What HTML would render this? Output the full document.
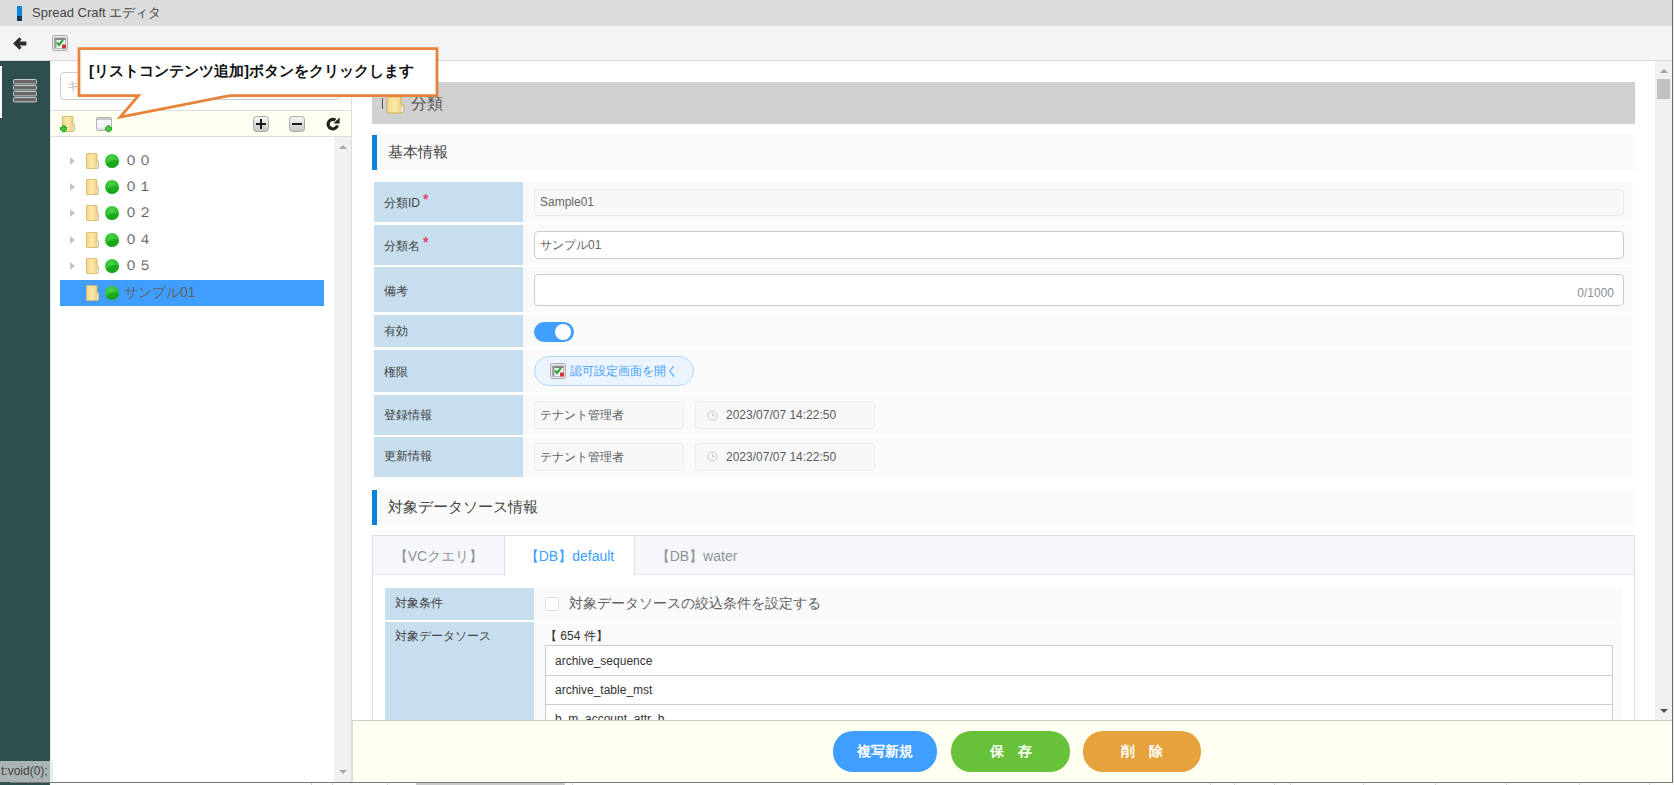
<!DOCTYPE html>
<html lang="ja">
<head>
<meta charset="utf-8">
<title>Spread Craft エディタ</title>
<style>
*{box-sizing:border-box;}
html,body{margin:0;padding:0;}
body{width:1674px;height:785px;overflow:hidden;background:#fff;position:relative;font-family:"Liberation Sans",sans-serif;font-size:12px;color:#444;}
.abs{position:absolute;}
#titlebar{left:0;top:0;width:1672px;height:26px;background:#dcdcdc;}
#titlebar .bar{left:17px;top:6.3px;width:5.2px;height:14.6px;background:linear-gradient(#0a86dc 0,#0a86dc 66%,#0b3f60 66%,#0b3f60 100%);}
#titlebar .ttl{left:32px;top:0;line-height:25px;font-size:13px;color:#444;white-space:nowrap;}
#toolbar{left:0;top:26px;width:1672px;height:35px;background:#f4f4f4;border-bottom:1px solid #d9d9d9;}
#winr{left:1672px;top:0;width:1px;height:783px;background:#6a6a6a;}
#winr2{left:1673px;top:0;width:1px;height:785px;background:#f0f0f0;}
#sidebar{left:0;top:61px;width:50px;height:724px;background:#2f4f4f;}
#leftpanel{left:50px;top:61px;width:302px;height:721px;background:#fff;border-right:1px solid #ddd;border-left:1px solid #dfe6ea;}
#search{left:60px;top:72px;width:280px;height:28px;border:1px solid #ccc;border-radius:4px;background:#fff;color:#bbb;font-size:12px;line-height:26px;padding-left:6px;}
#strip{left:51px;top:110px;width:300px;height:27.4px;background:#fffff2;border-top:1px solid #ddd;border-bottom:1px solid #ddd;}
#lscroll{left:334px;top:137px;width:17px;height:645px;background:#f1f1f1;}
.trow{left:60px;width:264px;height:26px;}
.trow.sel{background:#409eff;}
.trow .arr{left:10px;top:9px;width:0;height:0;border-left:5px solid #c0c4cc;border-top:4px solid transparent;border-bottom:4px solid transparent;}
.trow .fold{left:26px;top:5px;}
.trow .ball{left:45.3px;top:6px;width:14px;height:14px;border-radius:50%;background:radial-gradient(circle at 45% 30%,#4ad04a 0,#2fc02f 50%,#1fae1f 100%);overflow:hidden;}
.trow .ball:after{content:"";position:absolute;left:1px;top:6.5px;width:18px;height:14px;border-radius:50%;background:rgba(10,150,10,.55);}
.trow .txt{left:64px;top:0;line-height:24px;font-size:14px;color:#606266;white-space:nowrap;}
#main{left:352px;top:61px;width:1303px;height:660px;background:#fff;overflow:hidden;}
#rscroll{left:1655px;top:61px;width:17px;height:660px;background:#f1f1f1;}
#hdr{left:372.4px;top:82.2px;width:1262.6px;height:41.7px;background:#d0d0d0;}
.sec{left:372.4px;width:1262.6px;height:35.2px;background:#fafafa;border-left:5px solid #0a84d8;font-size:15px;color:#444;line-height:34px;padding-left:11px;white-space:nowrap;}
.lab{left:374px;width:149px;background:#c6deed;color:#444;font-size:12px;padding-left:10px;white-space:nowrap;}
.val{left:523px;width:1110px;background:#fafafa;}
.req{color:#e0406a;font-size:14px;position:relative;top:-3px;left:3px;font-weight:bold;}
.inp{left:534px;width:1090px;border:1px solid #ccc;border-radius:4px;background:#fff;font-size:12px;color:#666;padding-left:5px;white-space:nowrap;}
.inp.dis{background:#f8f8f8;border-color:#ebebee;}
.ro{border:1px solid #eeeef1;border-radius:4px;background:#f8f8f9;font-size:12px;color:#5a5c60;height:28px;line-height:26px;white-space:nowrap;}
#footer{left:352px;top:720px;width:1320px;height:62px;background:#fffff2;border-top:1px solid #ccc;border-left:1px solid #ddd;}
.btn{top:731px;height:40.6px;border-radius:20px;color:#fff;font-size:14px;font-weight:bold;text-align:center;line-height:40px;white-space:nowrap;}
#botline{left:10px;top:782px;width:1663px;height:1px;background:#777;}
#status{left:0;top:761px;width:53px;height:21px;background:linear-gradient(90deg,#a9b3b3 0,#a9b3b3 50px,#e9ecec 50px);color:#444;font-size:12px;line-height:21px;padding-left:1px;white-space:nowrap;}
#tabs{left:372px;top:535px;width:1263px;height:200px;border:1px solid #dcdfe6;background:#fff;}
#tabhead{left:0;top:0;width:1261px;height:39.4px;background:#f5f7fa;border-bottom:1px solid #e4e7ed;}
.tab{top:0;height:39.4px;line-height:40px;font-size:14px;color:#909399;text-align:center;white-space:nowrap;}
.tab.act{background:#fff;color:#409eff;border-left:1px solid #dcdfe6;border-right:1px solid #dcdfe6;height:40.4px;}
.lab2{left:385px;width:149px;background:#c6deed;color:#444;font-size:12px;padding-left:10px;white-space:nowrap;}
.val2{left:534px;width:1088px;background:#fafafa;}
#list{left:545px;top:645.2px;width:1068px;height:100px;border:1px solid #ccc;background:#fff;}
#list div{height:30px;line-height:29px;border-bottom:1px solid #ccc;padding-left:9px;font-size:12px;color:#333;white-space:nowrap;}
</style>
</head>
<body>

<svg width="0" height="0" style="position:absolute">
<defs>
<linearGradient id="gf" x1="0" y1="0" x2="1" y2="0"><stop offset="0" stop-color="#f3d88e"/><stop offset="0.45" stop-color="#fbe9a8"/><stop offset="1" stop-color="#ecc878"/></linearGradient>
<linearGradient id="gb" x1="0" y1="0" x2="0" y2="1"><stop offset="0" stop-color="#f8f8f8"/><stop offset="1" stop-color="#c4c4c4"/></linearGradient>
<symbol id="fold" viewBox="0 0 13 16"><path d="M0.5 1 Q0.5 0.5 1 0.5 L10.5 0.5 Q11 0.5 11 1 L11 7 Q12.8 7.5 12.6 10 L12.4 14.5 Q12.3 15.5 11 15.5 L1 15.5 Q0.5 15.5 0.5 15 Z" fill="url(#gf)" stroke="#d9b86c" stroke-width="0.9"/><path d="M11.2 8 Q12.7 8.8 12.3 11 L12 14.6 Q11 15.2 10.2 14.4 Q11.3 12 11.2 8 Z" fill="#f4f7ee" stroke="#c9b88a" stroke-width="0.4"/></symbol>
<symbol id="gplus" viewBox="0 0 8 8"><path d="M2.6 0.6 L5.4 0.6 L5.4 2.6 L7.4 2.6 L7.4 5.4 L5.4 5.4 L5.4 7.4 L2.6 7.4 L2.6 5.4 L0.6 5.4 L0.6 2.6 L2.6 2.6 Z" fill="#48d048" stroke="#22a822" stroke-width="1.1" stroke-linejoin="round"/></symbol>
<symbol id="chk" viewBox="0 0 16 16"><rect x="0.5" y="0.5" width="15" height="15" rx="2" fill="#e8e8e8" stroke="#aaa"/><rect x="2.5" y="3" width="11" height="10.5" fill="#f6f6f6" stroke="#999" stroke-width="0.6"/><rect x="2.5" y="3" width="11" height="2" fill="#888"/><rect x="2.5" y="3" width="2" height="10" fill="#999"/><path d="M5 7.5 L7 10 L11 5" stroke="#2faa3b" stroke-width="2.2" fill="none"/><rect x="10" y="9.5" width="4" height="4" fill="#d9303a"/></symbol>
</defs>
</svg>
<!-- window chrome -->
<div id="titlebar" class="abs"><div class="bar abs"></div><div class="ttl abs">Spread Craft エディタ</div></div>
<div id="toolbar" class="abs"></div>
<svg class="abs" style="left:12px;top:36px" width="16" height="15" viewBox="12 36 16 15"><path d="M13.1 43.5 L19.4 37.2 L21.6 39.4 L19.6 41.4 L26.4 41.4 L26.4 45.6 L19.6 45.6 L21.6 47.6 L19.4 49.8 Z" fill="#2e2e2e"/></svg>
<svg class="abs" style="left:52px;top:35px" width="16" height="16" viewBox="0 0 16 16"><rect x="0.5" y="0.5" width="15" height="15" rx="2" fill="#e8e8e8" stroke="#aaa"/><rect x="2.5" y="3" width="11" height="10.5" fill="#f6f6f6" stroke="#999" stroke-width="0.6"/><rect x="2.5" y="3" width="11" height="2" fill="#888"/><rect x="2.5" y="3" width="2" height="10" fill="#999"/><path d="M5 7.5 L7 10 L11 5" stroke="#2faa3b" stroke-width="2.2" fill="none"/><rect x="10" y="9.5" width="4" height="4" fill="#d9303a"/></svg>

<div id="sidebar" class="abs">
  <div class="abs" style="left:0;top:5px;width:2px;height:52px;background:#fff"></div>
  <svg class="abs" style="left:12.3px;top:17.3px" width="26" height="26" viewBox="0 0 26 26"><g fill="#6a6464" stroke="#c4cccc" stroke-width="1"><rect x="1.5" y="1.5" width="23" height="4.4" rx="1"/><rect x="1.5" y="7.5" width="23" height="4.4" rx="1"/><rect x="1.5" y="13.5" width="23" height="4.4" rx="1"/><rect x="1.5" y="19.5" width="23" height="4.4" rx="1"/></g></svg>
</div>

<div id="leftpanel" class="abs"></div>
<div id="search" class="abs">キーワード</div>
<div id="strip" class="abs"></div>
<div id="lscroll" class="abs">
  <div class="abs" style="left:5px;top:8px;width:0;height:0;border-bottom:4px solid #a8a8a8;border-left:4px solid transparent;border-right:4px solid transparent"></div>
  <div class="abs" style="left:5px;top:633px;width:0;height:0;border-top:4px solid #a8a8a8;border-left:4px solid transparent;border-right:4px solid transparent"></div>
</div>


<svg class="abs" style="left:62px;top:116px" width="13" height="16"><use href="#fold"/></svg>
<svg class="abs" style="left:59.8px;top:125.2px" width="7.4" height="7.6"><use href="#gplus"/></svg>
<svg class="abs" style="left:96px;top:117px" width="16" height="14" viewBox="0 0 16 14"><rect x="0.5" y="0.5" width="15" height="13" rx="1.5" fill="#f6f5f7" stroke="#b4b4b4"/><rect x="1" y="1" width="14" height="2" fill="#c6c6c6"/><rect x="1.5" y="10.5" width="13" height="2.5" fill="#e2e2e5"/></svg>
<svg class="abs" style="left:105.2px;top:125.3px" width="7.2" height="7.6"><use href="#gplus"/></svg>
<svg class="abs" style="left:253px;top:116px" width="16" height="16" viewBox="0 0 16 16"><rect x="0.5" y="0.5" width="15" height="15" rx="3" fill="url(#gb)" stroke="#a9a9a9"/><path d="M3 8 H13 M8 3 V13" stroke="#1a1a1a" stroke-width="2"/></svg>
<svg class="abs" style="left:289px;top:116px" width="16" height="16" viewBox="0 0 16 16"><rect x="0.5" y="0.5" width="15" height="15" rx="3" fill="url(#gb)" stroke="#a9a9a9"/><path d="M3 8 H13" stroke="#1a1a1a" stroke-width="2"/></svg>
<svg class="abs" style="left:326px;top:117px" width="14" height="14" viewBox="0 0 14 14"><path d="M11.4 8.4 A4.7 4.7 0 1 1 9.4 3.2" fill="none" stroke="#222" stroke-width="3.2"/><path d="M13.6 0.4 L13.6 6.6 L7.4 6.6 Z" fill="#222"/></svg>
<div class="trow abs" style="top:147.6px"><div class="arr abs"></div><svg class="fold abs" width="13" height="16"><use href="#fold"/></svg><div class="ball abs"></div><div class="txt abs">００</div></div>
<div class="trow abs" style="top:173.9px"><div class="arr abs"></div><svg class="fold abs" width="13" height="16"><use href="#fold"/></svg><div class="ball abs"></div><div class="txt abs">０１</div></div>
<div class="trow abs" style="top:200.2px"><div class="arr abs"></div><svg class="fold abs" width="13" height="16"><use href="#fold"/></svg><div class="ball abs"></div><div class="txt abs">０２</div></div>
<div class="trow abs" style="top:226.5px"><div class="arr abs"></div><svg class="fold abs" width="13" height="16"><use href="#fold"/></svg><div class="ball abs"></div><div class="txt abs">０４</div></div>
<div class="trow abs" style="top:252.8px"><div class="arr abs"></div><svg class="fold abs" width="13" height="16"><use href="#fold"/></svg><div class="ball abs"></div><div class="txt abs">０５</div></div>
<div class="trow abs sel" style="top:279.5px"><svg class="fold abs" width="13" height="16"><use href="#fold"/></svg><div class="ball abs"></div><div class="txt abs">サンプル01</div></div>
<div id="main" class="abs"></div>
<div id="rscroll" class="abs">
  <div class="abs" style="left:4.5px;top:8px;width:0;height:0;border-bottom:4px solid #a3a3a3;border-left:4px solid transparent;border-right:4px solid transparent"></div>
  <div class="abs" style="left:2px;top:18px;width:13px;height:20px;background:#c1c1c1"></div>
  <div class="abs" style="left:4.5px;top:648px;width:0;height:0;border-top:4px solid #505050;border-left:4px solid transparent;border-right:4px solid transparent"></div>
</div>

<div id="hdr" class="abs"><div class="abs" style="left:10px;top:16px;width:1px;height:11px;background:#555"></div>
<svg class="abs" style="left:13.6px;top:13.6px" width="19" height="18" viewBox="0 0 19 18"><path d="M1 2.5 Q1 1 2.5 1 L13.5 1 Q15 1 15 2.5 L15 8 Q18.4 8.6 18 12 L17.6 15.5 Q17.4 17 15.5 17 L2.5 17 Q1 17 1 15.5 Z" fill="url(#gf)" stroke="#d2ab55" stroke-width="1"/><path d="M15.3 9 Q17.8 10 17.3 12.6 L16.9 16 Q15.4 16.8 14.2 15.6 Q15.6 12.6 15.3 9 Z" fill="#f4f7ee" stroke="#c9b88a" stroke-width="0.5"/></svg>
<div class="abs" style="left:39px;top:0;line-height:43px;font-size:16px;color:#555;white-space:nowrap">分類</div></div>
<div class="sec abs" style="top:134.5px">基本情報</div>
<div class="sec abs" style="top:490px">対象データソース情報</div>

<div class="lab abs" style="top:182px;height:40px;line-height:40px">分類ID<span class="req">*</span></div><div class="val abs" style="top:182px;height:40px"></div>
<div class="lab abs" style="top:224.5px;height:40.3px;line-height:40.3px">分類名<span class="req">*</span></div><div class="val abs" style="top:224.5px;height:40.3px"></div>
<div class="lab abs" style="top:267px;height:45.4px;line-height:48px">備考</div><div class="val abs" style="top:267px;height:45.4px"></div>
<div class="lab abs" style="top:315.3px;height:32.2px;line-height:32.2px">有効</div><div class="val abs" style="top:315.3px;height:32.2px"></div>
<div class="lab abs" style="top:350.2px;height:41.8px;line-height:44.6px">権限</div><div class="val abs" style="top:350.2px;height:41.8px"></div>
<div class="lab abs" style="top:394.8px;height:40px;line-height:40px">登録情報</div><div class="val abs" style="top:394.8px;height:40px"></div>
<div class="lab abs" style="top:437.3px;height:39.7px;line-height:39.7px">更新情報</div><div class="val abs" style="top:437.3px;height:39.7px"></div>
<div class="inp dis abs" style="top:188.7px;height:27.3px;line-height:25.6px">Sample01</div>
<div class="inp abs" style="top:231px;height:28px;line-height:26px">サンプル01</div>
<div class="inp abs" style="top:274px;height:32px"></div>
<div class="abs" style="left:1540px;top:286px;width:74px;text-align:right;font-size:12px;color:#8c8f96;line-height:14px">0/1000</div>
<div class="abs" style="left:534px;top:322px;width:40px;height:20px;border-radius:10px;background:#409eff"><div class="abs" style="left:21px;top:2px;width:16px;height:16px;border-radius:50%;background:#fff"></div></div>
<div class="abs" style="left:534px;top:356px;width:160px;height:30px;border-radius:15px;border:1px solid #b3d8ff;background:#ecf5ff;color:#409eff;font-size:12px;line-height:28px;white-space:nowrap"><svg class="abs" style="left:15px;top:6px" width="16" height="16"><use href="#chk"/></svg><span class="abs" style="left:35px;top:0">認可設定画面を開く</span></div>
<div class="ro abs" style="left:534px;top:401px;width:150px;padding-left:5px">テナント管理者</div>
<div class="ro abs" style="left:695px;top:401px;width:180px;padding-left:30px">2023/07/07 14:22:50<svg class="abs" style="left:10.5px;top:7.6px" width="11" height="11" viewBox="0 0 11 11"><circle cx="5.5" cy="5.5" r="4.6" fill="none" stroke="#c0c4cc" stroke-width="1"/><path d="M5.5 2.8 V5.8 H7.8" fill="none" stroke="#c0c4cc" stroke-width="1"/></svg></div>
<div class="ro abs" style="left:534px;top:442.8px;width:150px;padding-left:5px">テナント管理者</div>
<div class="ro abs" style="left:695px;top:442.8px;width:180px;padding-left:30px">2023/07/07 14:22:50<svg class="abs" style="left:10.5px;top:7.6px" width="11" height="11" viewBox="0 0 11 11"><circle cx="5.5" cy="5.5" r="4.6" fill="none" stroke="#c0c4cc" stroke-width="1"/><path d="M5.5 2.8 V5.8 H7.8" fill="none" stroke="#c0c4cc" stroke-width="1"/></svg></div>
<div id="tabs" class="abs"><div id="tabhead" class="abs"></div>
<div class="tab abs" style="left:0;width:131px">【VCクエリ】</div>
<div class="tab act abs" style="left:131px;width:131px">【DB】default</div>
<div class="tab abs" style="left:258px;width:131px">【DB】water</div>
</div>
<div class="lab2 abs" style="top:587.5px;height:32px;line-height:31px">対象条件</div><div class="val2 abs" style="top:587.5px;height:32px"></div>
<div class="lab2 abs" style="top:622.3px;height:100px;line-height:29px">対象データソース</div><div class="val2 abs" style="top:622.3px;height:100px"></div>
<div class="abs" style="left:545px;top:597px;width:14px;height:14px;border:1px solid #dcdfe6;border-radius:2px;background:#fff"></div>
<div class="abs" style="left:569px;top:593px;font-size:14px;color:#606266;line-height:20px;white-space:nowrap">対象データソースの絞込条件を設定する</div>
<div class="abs" style="left:545px;top:629px;font-size:12px;color:#333;line-height:14px;white-space:nowrap">【 654 件】</div>
<div id="list" class="abs"><div style="height:30.3px;line-height:30px">archive_sequence</div><div style="height:29px;line-height:29px">archive_table_mst</div><div>b_m_account_attr_b</div></div>
<div id="footer" class="abs"></div>
<div class="btn abs" style="left:833px;width:104px;background:#409eff">複写新規</div>
<div class="btn abs" style="left:951px;width:119px;background:#67c23a">保　存</div>
<div class="btn abs" style="left:1083px;width:118px;background:#e6a23c">削　除</div>
<div id="botline" class="abs"></div>
<div class="abs" style="left:416px;top:783px;width:149px;height:2px;background:#cbcbcb"></div>
<div class="abs" style="left:311px;top:783px;width:1px;height:2px;background:#d4d4d4"></div><div class="abs" style="left:332px;top:783px;width:1px;height:2px;background:#d4d4d4"></div><div class="abs" style="left:387px;top:783px;width:1px;height:2px;background:#d4d4d4"></div><div class="abs" style="left:572px;top:783px;width:1px;height:2px;background:#d4d4d4"></div><div class="abs" style="left:1210px;top:783px;width:1px;height:2px;background:#d4d4d4"></div><div class="abs" style="left:1234px;top:783px;width:1px;height:2px;background:#d4d4d4"></div><div class="abs" style="left:1274px;top:783px;width:1px;height:2px;background:#d4d4d4"></div><div class="abs" style="left:1290px;top:783px;width:1px;height:2px;background:#d4d4d4"></div><div class="abs" style="left:1363px;top:783px;width:1px;height:2px;background:#d4d4d4"></div><div class="abs" style="left:1435px;top:783px;width:1px;height:2px;background:#d4d4d4"></div><div class="abs" style="left:1506px;top:783px;width:1px;height:2px;background:#d4d4d4"></div><div class="abs" style="left:1579px;top:783px;width:1px;height:2px;background:#d4d4d4"></div><div class="abs" style="left:1649px;top:783px;width:1px;height:2px;background:#d4d4d4"></div>
<div id="status" class="abs">t:void(0);</div>
<svg class="abs" style="left:70px;top:40px" width="380" height="90" viewBox="70 40 380 90"><path d="M79 48.7 L437 48.7 L437 95.6 L229.5 95.6 L120.2 117.2 L138.5 95.6 L79 95.6 Z" fill="#fff" stroke="#e8833a" stroke-width="2.8" stroke-linejoin="miter"/></svg>
<div class="abs" style="left:89px;top:60px;font-size:15px;font-weight:bold;color:#111;line-height:22px;white-space:nowrap">[リストコンテンツ追加]ボタンをクリックします</div>
<div id="winr" class="abs"></div><div id="winr2" class="abs"></div>
</body>
</html>
